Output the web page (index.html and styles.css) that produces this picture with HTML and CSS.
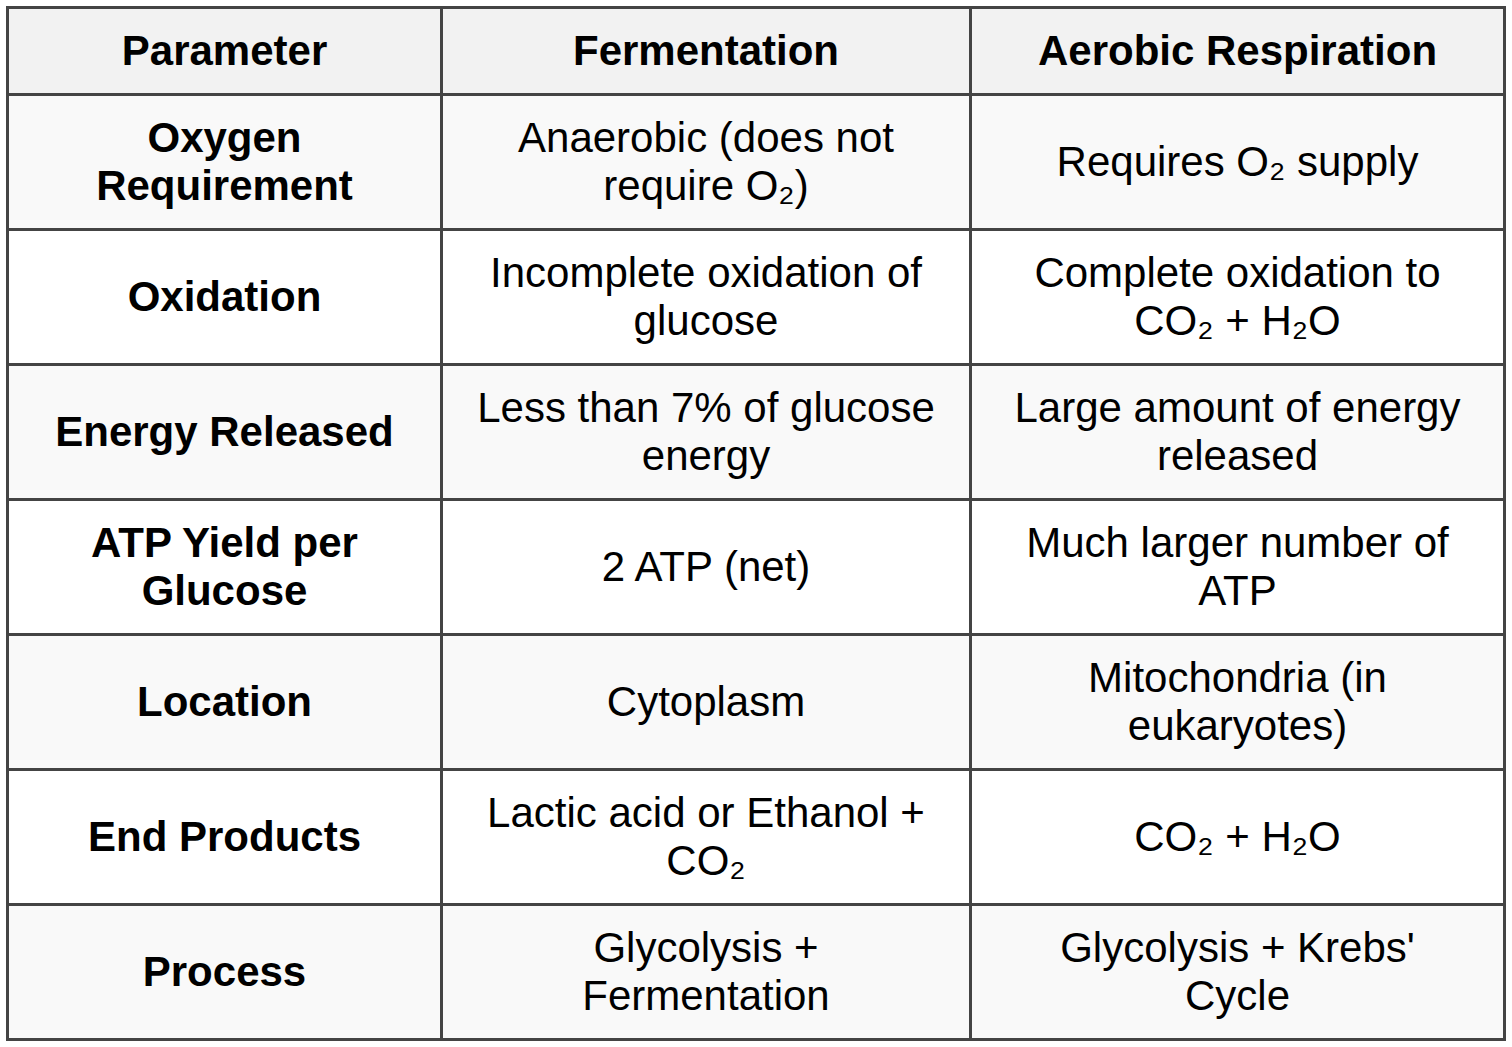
FILE: index.html
```html
<!DOCTYPE html>
<html>
<head>
<meta charset="utf-8">
<link rel="stylesheet" href="styles.css">
</head>
<body>
<div class="table">
  <div class="cell head">Parameter</div>
  <div class="cell head">Fermentation</div>
  <div class="cell head">Aerobic Respiration</div>

  <div class="cell label shade">Oxygen<br>Requirement</div>
  <div class="cell shade">Anaerobic (does not<br>require O₂)</div>
  <div class="cell shade">Requires O₂ supply</div>

  <div class="cell label">Oxidation</div>
  <div class="cell">Incomplete oxidation of<br>glucose</div>
  <div class="cell">Complete oxidation to<br>CO₂ + H₂O</div>

  <div class="cell label shade">Energy Released</div>
  <div class="cell shade">Less than 7% of glucose<br>energy</div>
  <div class="cell shade">Large amount of energy<br>released</div>

  <div class="cell label">ATP Yield per<br>Glucose</div>
  <div class="cell">2 ATP (net)</div>
  <div class="cell">Much larger number of<br>ATP</div>

  <div class="cell label shade">Location</div>
  <div class="cell shade">Cytoplasm</div>
  <div class="cell shade">Mitochondria (in<br>eukaryotes)</div>

  <div class="cell label">End Products</div>
  <div class="cell">Lactic acid or Ethanol +<br>CO₂</div>
  <div class="cell">CO₂ + H₂O</div>

  <div class="cell label shade">Process</div>
  <div class="cell shade">Glycolysis +<br>Fermentation</div>
  <div class="cell shade">Glycolysis + Krebs'<br>Cycle</div>
</div>
</body>
</html>
```

FILE: styles.css
```css
html, body {
  margin: 0;
  padding: 0;
  background: #ffffff;
}
body {
  padding: 6px;
}
.table {
  display: grid;
  grid-template-columns: 431px 526px 531px;
  grid-template-rows: 84px repeat(7, 132px);
  gap: 3px;
  padding: 3px;
  width: 1494px;
  background: #444444;
  font-family: "Liberation Sans", Arial, sans-serif;
  font-size: 42px;
  line-height: 48px;
  color: #000000;
}
.cell {
  display: flex;
  align-items: center;
  justify-content: center;
  text-align: center;
  background: #ffffff;
}
.head {
  background: #f2f2f2;
  font-weight: bold;
}
.shade {
  background: #f9f9f9;
}
.label {
  font-weight: bold;
}
```
